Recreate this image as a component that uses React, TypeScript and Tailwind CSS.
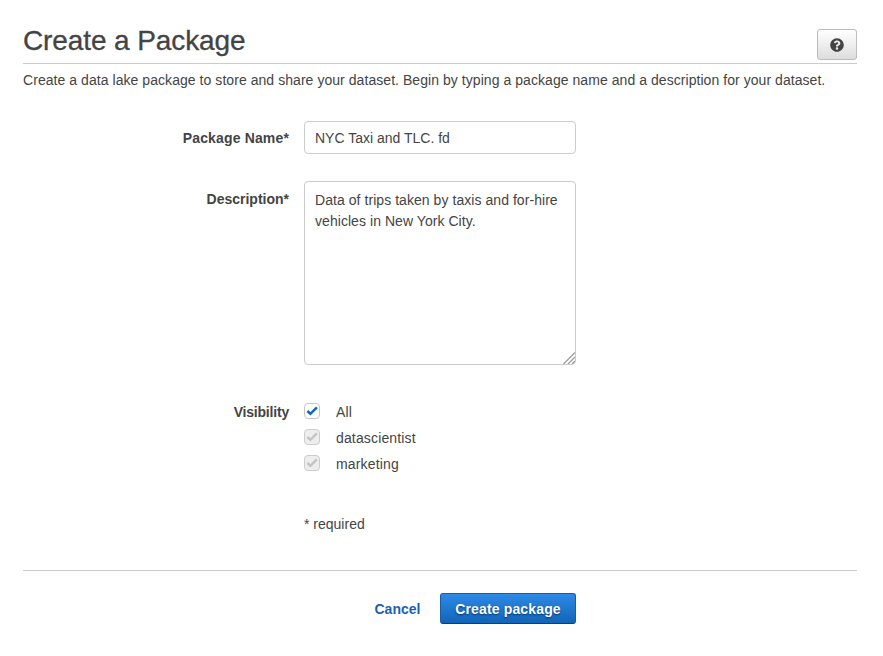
import { FaQuestionCircle } from "react-icons/fa";

const groups = [
  { name: "All", enabled: true },
  { name: "datascientist", enabled: false },
  { name: "marketing", enabled: false },
];

function Label({ children, spacing }: { children: string; spacing: string }) {
  return <div className={`w-[266px] shrink-0 text-right font-bold whitespace-nowrap ${spacing}`}>{children}</div>;
}

function Checkbox({ enabled }: { enabled: boolean }) {
  return (
    <span
      className={
        enabled
          ? "flex size-4 items-center justify-center rounded-[4px] border border-[#c6c6c6] bg-white text-[#1166bb]"
          : "flex size-4 items-center justify-center rounded-[4px] border border-[#cccccc] bg-[#eeeeee] text-[#c4c4c4]"
      }
    >
      <svg width="14" height="14" viewBox="0 0 14 14" fill="none" stroke="currentColor" strokeWidth="2.5">
        <path d="M2.4 7L5.4 9.8L11.9 3.4" />
      </svg>
    </span>
  );
}

export default function App() {
  return (
    <main className="h-[656px] w-[883px] bg-white pr-[26px] pl-[23px] font-['Liberation_Sans',Arial,sans-serif] text-[14px] leading-[21px] tracking-[0.055px] text-[#444444]">
      <header className="flex h-16 items-start justify-between border-b border-[#cccccc]">
        <h1 className="mt-[23px] text-[28px] leading-9 tracking-[-0.1px] whitespace-nowrap [-webkit-text-stroke:0.3px_#444444]">Create a Package</h1>
        <button
          aria-label="Help"
          className="mt-[29px] flex h-[31px] w-10 items-center justify-center rounded-[3px] border border-[#bbbbbb] bg-linear-to-b from-white to-[#dddddd]"
        >
          <FaQuestionCircle size={14} />
        </button>
      </header>
      <p className="mt-[6px] whitespace-nowrap">
        Create a data lake package to store and share your dataset. Begin by typing a package name and a description for your dataset.
      </p>

      <form>
        <div className="mt-[30px] flex gap-[15px]">
          <div className="pt-[7px]"><Label spacing="tracking-[0.15px]">Package Name*</Label></div>
          <div className="h-[33px] w-[272px] rounded-[4px] border border-[#cccccc] px-[10px] pt-[6px] tracking-normal">NYC Taxi and TLC. fd</div>
        </div>
        <div className="mt-[27px] flex gap-[15px]">
          <div className="pt-[8px]"><Label spacing="tracking-normal">Description*</Label></div>
          <div className="relative h-[184px] w-[272px] rounded-[4px] border border-[#cccccc] px-[10px] pt-[8px]">
            <p className="whitespace-nowrap">Data of trips taken by taxis and for-hire<br />vehicles in New York City.</p>
            <svg className="absolute right-0 bottom-0" width="12" height="12" viewBox="0 0 12 12" fill="none" stroke="#a0a0a0" strokeWidth="1.4">
              <path d="M0.5 12L12 0.5M5 12L12 5M9 12L12 9" />
            </svg>
          </div>
        </div>
        <div className="mt-[37px] flex gap-[15px]">
          <Label spacing="tracking-[-0.2px]">Visibility</Label>
          <div className="flex flex-col gap-[5px]">
            {groups.map((group) => (
              <div key={group.name} className="flex h-[21px] items-start gap-4">
                <div className="pt-px"><Checkbox enabled={group.enabled} /></div>
                <span className="tracking-[0.15px]">{group.name}</span>
              </div>
            ))}
          </div>
        </div>
        <p className="mt-[39px] ml-[281px] tracking-normal">* required</p>
      </form>

      <footer className="mt-[35px] flex items-center gap-[19px] border-t border-[#cccccc] pt-[22px] pl-[351.5px] font-bold">
        <a className="w-[46.5px] pt-0.5 tracking-normal text-[#1b5fb3]">Cancel</a>
        <button className="h-[31px] w-[136px] rounded-[3px] border border-[#1c5ba5] border-b-[#0b3f78] bg-linear-to-b from-[#2d8ae8] to-[#1165b7] pt-0.5 tracking-[0.15px] whitespace-nowrap text-white [text-shadow:0_1px_2px_#063566]">
          Create package
        </button>
      </footer>
    </main>
  );
}
